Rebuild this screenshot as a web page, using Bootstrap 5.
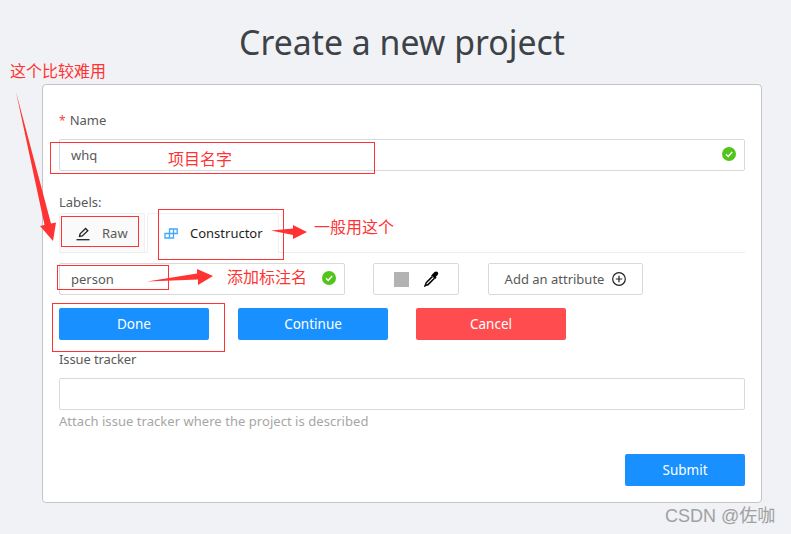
<!DOCTYPE html>
<html lang="en">
<head>
<meta charset="utf-8">
<title>Create a new project</title>
<link href="https://cdn.jsdelivr.net/npm/bootstrap@5.3.0/dist/css/bootstrap.min.css" rel="stylesheet">
<style>
html,body{height:534px;overflow:hidden}
body{background:#f0f2f5;font-family:"Noto Sans","Noto Sans CJK SC",sans-serif;font-size:13px;color:#595959;position:relative}
.shell{width:720px;margin-left:42px}
.page-title{font-size:33.8px;font-weight:400;line-height:44px;color:#3d4248;text-align:center;margin:20px 0 20px;font-family:"Noto Sans",sans-serif}
.form-box{border:1px solid #c4c4c6;border-radius:4px;background:#fff;height:419px;padding:25px 16px 0 16px}
.fld-label{font-size:13px;line-height:20px;color:#595959;margin:0}
.req{color:#f5424d;margin-right:4px;font-size:12px}
.fld{height:32px;border:1px solid #d9d9d9;border-radius:2px;font-size:13px;color:#595959;padding:0 11px;background:#fff;box-shadow:none}
.name-wrap{margin-top:8px;margin-bottom:21px}
.ok-dot{width:14px;height:14px;flex:none;display:block}
.inline-fld{position:relative}
.inline-fld .ok-dot{position:absolute;right:9px;top:8px}
.tabstrip{height:40px;margin-top:1px;border-bottom:1px solid #ececec;display:flex;gap:2px;align-items:stretch}
.tabx{border:1px solid #f0f0f0;border-bottom:0;border-radius:2px 2px 0 0;display:flex;align-items:center;font-size:13px;background:#fafafa;color:#595959;padding-top:2px}
.tabx.raw{width:86px;padding-left:16px;gap:12px}
.tabx.ctor{width:132px;background:#fff;color:#1f1f1f;padding:0 0 0 16px;gap:12px;height:40px}
.tabx svg{flex:none}
.attr-row{margin-top:10px;height:32px}
.attr-name{width:286px}
.attr-name .fld{padding-left:11px;width:100%}
.color-btn{width:86px;height:32px;margin-left:28px;border:1px solid #d9d9d9;border-radius:2px;background:#fff;gap:15px;padding:0}
.swatch{width:15px;height:15px;background:#b3b3b3;display:block}
.add-btn{width:155px;height:32px;margin-left:29px;border:1px solid #d9d9d9;border-radius:2px;background:#fff;color:#595959;font-size:13px;padding:2px 0 0;gap:8px}
.add-btn svg{margin-top:-2px}
.act-row{margin-top:13px}
.act{width:150px;height:32px;border:0;border-radius:2px;color:#fff;font-size:13.5px;padding:0;font-weight:400;line-height:32px}
.act:hover{color:#fff}
.blue{background:#1890ff}
.red{background:#ff4d4f}
.act-gap-a{margin-left:29px}
.act-gap-b{margin-left:28px}
.act-short{width:120px}
.issue-lbl{margin-top:9px;margin-bottom:9px;letter-spacing:-.1px}
.hint{font-size:13px;line-height:20px;color:#a6a6a6;margin-top:1px;letter-spacing:.045px}
.submit-row{margin-top:23px}
.mk{position:absolute;border:1px solid #f33;pointer-events:none;display:block}
.mk1{left:50px;top:142px;width:325px;height:32px}
.mk2{left:61px;top:216px;width:78px;height:31px}
.mk3{left:158px;top:209px;width:126px;height:51px}
.mk4{left:57px;top:265px;width:112px;height:25px}
.mk5{left:52px;top:303px;width:173px;height:49px}
.note{position:absolute;color:#f33;font-size:16px;line-height:20px;white-space:nowrap;font-family:"Noto Sans CJK SC",sans-serif}
.n1{left:10px;top:60px}
.n2{left:168px;top:148px}
.n3{left:314px;top:216px}
.n4{left:227px;top:266px}
.arrows{position:absolute;left:0;top:0;pointer-events:none}
.wm{position:absolute;left:665px;top:504px;font-family:"Liberation Sans","Noto Sans CJK SC",sans-serif;font-size:18px;line-height:24px;color:#a0a0a0;white-space:nowrap}
</style>
</head>
<body>
<div class="shell">
  <h1 class="page-title">Create a new project</h1>
  <div class="form-box">
    <p class="fld-label"><span class="req">*</span>Name</p>
    <div class="inline-fld name-wrap">
      <input class="form-control fld" value="whq">
      <svg class="ok-dot" viewBox="0 0 14 14"><circle cx="7" cy="7" r="7" fill="#52c41a"/><path d="M4 7.200l2.200 2.200L10.200 5" fill="none" stroke="#fff" stroke-width="1.400"/></svg>
    </div>
    <p class="fld-label">Labels:</p>
    <div class="tabstrip">
      <div class="tabx raw">
        <svg width="14" height="14" viewBox="0 0 14 14" fill="none" stroke="#222" stroke-width="1.300"><path d="M3.500 9.500l.6-2.600L9.600 1.500l2.200 2.200-5.500 5.300z"/><path d="M.5 12.700h13"/></svg>
        <span>Raw</span>
      </div>
      <div class="tabx ctor">
        <svg width="14" height="12" viewBox="0 0 14 12" fill="none" stroke="#40a9ff" stroke-width="1.300"><path d="M5.500 1h7.700v4.500H9.500V10H1V5.500h4.500zM5.500 5.500h4M5.500 5.500V10M9.500 1v4.500"/></svg>
        <span>Constructor</span>
      </div>
    </div>
    <div class="d-flex attr-row">
      <div class="inline-fld attr-name">
        <input class="form-control fld" value="person">
        <svg class="ok-dot" viewBox="0 0 14 14"><circle cx="7" cy="7" r="7" fill="#52c41a"/><path d="M4 7.200l2.200 2.200L10.200 5" fill="none" stroke="#fff" stroke-width="1.400"/></svg>
      </div>
      <button type="button" class="btn d-flex align-items-center justify-content-center color-btn">
        <span class="swatch"></span>
        <svg width="15" height="16" viewBox="0 0 15 16"><path d="M8.800 2.800l1.800-1.700c.9-.9 2.300-.9 3 0 .8.800.8 2.100 0 2.900l-1.800 1.800.8.800-1.700 1.600L7.200 4.400z" fill="#000"/><path d="M8.300 5.600L2.400 11.500c-.5.500-.5 1-.7 1.700L1 14.800l1.600-.7c.7-.2 1.200-.2 1.700-.7l5.900-5.900" fill="#fff" stroke="#000" stroke-width="1.500"/></svg>
      </button>
      <button type="button" class="btn d-flex align-items-center justify-content-center add-btn">
        <span>Add an attribute</span>
        <svg width="14" height="14" viewBox="0 0 14 14" fill="none" stroke="#222" stroke-width="1.200"><circle cx="7" cy="7" r="6.300"/><path d="M7 3.800v6.400M3.800 7h6.400"/></svg>
      </button>
    </div>
    <div class="d-flex act-row">
      <button type="button" class="btn act blue">Done</button>
      <button type="button" class="btn act blue act-gap-a">Continue</button>
      <button type="button" class="btn act red act-gap-b">Cancel</button>
    </div>
    <p class="fld-label issue-lbl">Issue tracker</p>
    <input class="form-control fld">
    <div class="hint">Attach issue tracker where the project is described</div>
    <div class="d-flex justify-content-end submit-row">
      <button type="button" class="btn act blue act-short">Submit</button>
    </div>
  </div>
</div>

<span class="mk mk1"></span><span class="mk mk2"></span><span class="mk mk3"></span><span class="mk mk4"></span><span class="mk mk5"></span>
<svg class="arrows" width="791" height="534" viewBox="0 0 791 534">
  <path d="M16 92L51 223.500 56 222.500 53 241 40 226 44.500 225z" fill="#f33"/>
  <path d="M271 230.500L293 228.500 293 225 307 232 293 239 293 235z" fill="#f33"/>
  <path d="M147 281.500L197 273.500 197 269 213 276 198 285 198 279.500z" fill="#f33"/>
</svg>
<span class="note n1">这个比较难用</span>
<span class="note n2">项目名字</span>
<span class="note n3">一般用这个</span>
<span class="note n4">添加标注名</span>
<span class="wm">CSDN @佐咖</span>
</body>
</html>
